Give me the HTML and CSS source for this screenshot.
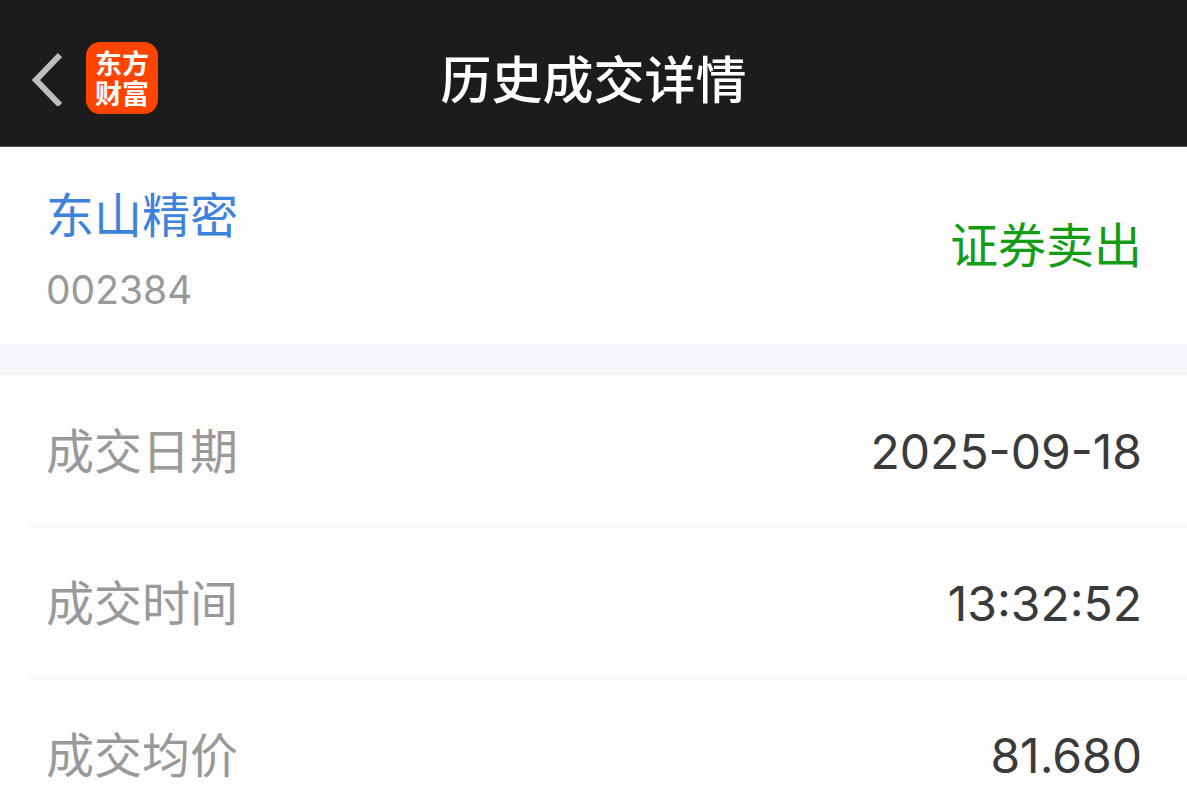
FILE: index.html
```html
<!DOCTYPE html>
<html lang="zh-CN">

<head>
	<title>历史成交详情</title>
	<meta charset="utf-8" />
	<meta name="viewport" content="width=device-width, initial-scale=1" />
	<link rel="stylesheet" href="styles.css">
</head>

<body>
	<div class="page">
		<header class="header">
			<div class="header-left">
				<a class="back" href="#" aria-label="返回">
					<svg width="32" height="56" viewBox="0 0 32 56">
						<path d="M28 5L4 30L28 55" fill="none" stroke="#bdbdbd" stroke-width="6" />
					</svg>
				</a>
				<a class="logo" href="#"><span>东方</span><span>财富</span></a>
			</div>
			<h1 class="title">历史成交详情</h1>
		</header>

		<section class="stock">
			<div>
				<a class="stock-name" href="#">东山精密</a>
				<div class="stock-code">002384</div>
			</div>
			<div class="side">证券卖出</div>
		</section>

		<dl class="list">
			<div class="row">
				<dt>成交日期</dt>
				<dd>2025-09-18</dd>
			</div>
			<div class="row">
				<dt>成交时间</dt>
				<dd>13:32:52</dd>
			</div>
			<div class="row">
				<dt>成交均价</dt>
				<dd>81.680</dd>
			</div>
		</dl>
	</div>
</body>

</html>
```

FILE: styles.css
```css
body,
h1,
dl,
dd {
	margin: 0;
}

body {
	background: #fdfdfd;
	font-family: Inter, "Noto Sans CJK SC", sans-serif;
	font-size: 48px;
	line-height: 72px;
	color: #3a3a3a;
}

a {
	text-decoration: none;
}

.page {
	height: 100vh;
	overflow: hidden;
}

/* 顶部导航 */
.header {
	display: grid;
	grid-template-columns: 1fr auto 1fr;
	align-items: center;
	padding: 39px 32px 29px;
	background: #1c1c1c;
	border-bottom: 1px solid #555;
}

.header-left {
	display: flex;
	align-items: center;
	gap: 22px;
}

.back svg {
	display: block;
}

.logo {
	display: flex;
	flex-direction: column;
	align-items: center;
	justify-content: center;
	width: 72px;
	height: 72px;
	border-radius: 14px;
	background: #ff4400;
	color: #fff;
	font-family: "Noto Sans CJK SC", sans-serif;
	font-size: 27px;
	font-weight: 700;
	line-height: 30px;
}

.title {
	padding-top: 6px;
	color: #fff;
	font-size: 51px;
	font-weight: 500;
}

/* 股票信息 */
.stock {
	display: flex;
	justify-content: space-between;
	align-items: center;
	padding: 27px 45px 26px 46px;
	border-bottom: 30px solid #f5f6f9;
}

.stock-name {
	display: block;
	margin-bottom: 4px;
	color: #3d82dc;
	line-height: 84px;
}

.stock-code {
	color: #999;
	font-size: 39px;
	line-height: 56px;
}

.side {
	color: #149c14;
}

/* 成交明细 */
.list {
	border-top: 1px solid #f1f1f3;
}

.row {
	display: flex;
	justify-content: space-between;
	margin-left: 30px;
	padding: 41px 45px 38px 16px;
	border-bottom: 1px solid #f3f3f3;
}

.row dt {
	color: #999;
}
```
